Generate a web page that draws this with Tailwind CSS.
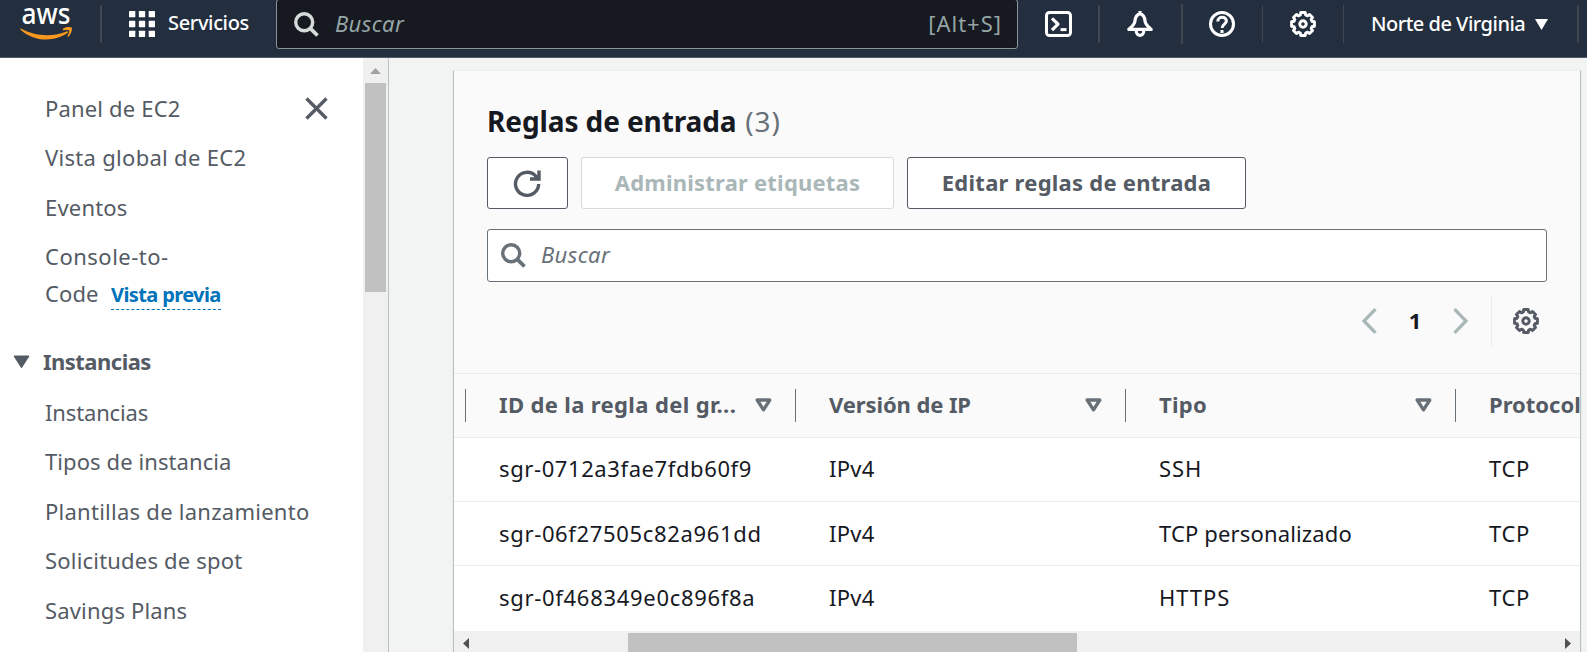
<!DOCTYPE html>
<html lang="es">
<head>
<meta charset="utf-8">
<title>EC2 | Reglas de entrada</title>
<script src="https://cdn.jsdelivr.net/npm/@tailwindcss/browser@4"></script>
</head>
<body class="flex h-[652px] w-[1587px] flex-col overflow-hidden bg-[#f2f3f3] font-['Noto_Sans',sans-serif] text-[22px] text-[#545b64]">

<svg class="hidden">
  <symbol id="gear" viewBox="-13 -13 26 26">
    <path fill="none" stroke="currentColor" stroke-width="3" stroke-linejoin="round" d="M9-2.700 11.400-2.200V2.200L9 2.700 8.200 4.500 9.500 6.500 6.500 9.500 4.500 8.200 2.700 9 2.200 11.400H-2.200L-2.700 9-4.500 8.200-6.500 9.500-9.500 6.500-8.200 4.500-9 2.700-11.400 2.200V-2.200L-9-2.700-8.200-4.500-9.500-6.500-6.500-9.500-4.500-8.200-2.700-9-2.200-11.400H2.200L2.700-9 4.500-8.200 6.500-9.500 9.500-6.500 8.200-4.500Z"/>
    <circle r="3.2" fill="none" stroke="currentColor" stroke-width="3"/>
  </symbol>
  <symbol id="search" viewBox="0 0 25 25">
    <circle cx="10.2" cy="10.2" r="8.5" fill="none" stroke="currentColor" stroke-width="3.4"/>
    <path d="M16.3 16.3l7.2 7.2" fill="none" stroke="currentColor" stroke-width="3.8"/>
  </symbol>
  <symbol id="sort" viewBox="0 0 17 14">
    <path d="M2.2 2h12.6L8.5 11.8z" fill="none" stroke="currentColor" stroke-width="3.3" stroke-linejoin="round"/>
  </symbol>
</svg>

<header class="flex h-[58px] shrink-0 items-start border-b border-[#545b64] bg-[#232f3e] text-white">
  <svg class="ml-5 h-[42px] w-[53px] shrink-0" viewBox="0 0 53 42">
    <text x="1.5" y="24" font-size="29" font-weight="500" fill="#fff" textLength="49" lengthAdjust="spacingAndGlyphs">aws</text>
    <path fill="#f7981f" d="M.8 28.6C9.500 33 17 35.300 27 35.300c7.500 0 14-1.600 19.500-3.800 1.300-.6 2.200.7 1 1.600C41.500 37.300 34 39.500 26.500 39.500 16 39.500 7.500 36 .6 29.700c-.6-.6-.5-1.400.2-1.100z"/>
    <path fill="#f7981f" d="M43 28.700c3-2 7.500-1.900 8.600-1.100 1 1-.3 6.300-2.800 8.900-.6.600-1.600.2-1.200-.4 1.100-2.300 1.900-4.900 1.400-5.600-.7-.7-3.500-.4-5.500-.2-.8.100-1-1.100-.5-1.600z"/>
  </svg>
  <div class="ml-[27px] mt-[5px] h-[38px] w-[2px] bg-[#414750]"></div>
  <svg class="ml-[27px] mt-[11px] h-[26px] w-[26px] shrink-0" viewBox="0 0 26 26" fill="#fff">
    <rect width="6.300" height="6.300" rx=".6"/><rect x="9.850" width="6.300" height="6.300" rx=".6"/><rect x="19.700" width="6.300" height="6.300" rx=".6"/>
    <rect y="9.850" width="6.300" height="6.300" rx=".6"/><rect x="9.850" y="9.850" width="6.300" height="6.300" rx=".6"/><rect x="19.700" y="9.850" width="6.300" height="6.300" rx=".6"/>
    <rect y="19.700" width="6.300" height="6.300" rx=".6"/><rect x="9.850" y="19.700" width="6.300" height="6.300" rx=".6"/><rect x="19.700" y="19.700" width="6.300" height="6.300" rx=".6"/>
  </svg>
  <span class="ml-[13px] mt-[5px] w-[83px] shrink-0 text-[20px] font-medium leading-[36px] tracking-[-0.35px]">Servicios</span>
  <div class="-mt-px ml-[25px] flex h-[50px] w-[742px] shrink-0 items-center rounded-[3px] border border-[#879596] bg-[#16191f] px-[17px] text-[#95a5a6]">
    <svg class="mt-px h-[25px] w-[25px] text-[#d5dbdb]"><use href="#search"/></svg>
    <span class="-mt-px ml-[16px] italic tracking-[0.4px]">Buscar</span>
    <span class="-mt-px ml-auto mr-[-2px] tracking-[1px]">[Alt+S]</span>
  </div>
  <svg class="ml-[27px] mt-[11px] h-[26px] w-[27px] shrink-0" viewBox="0 0 27 26" fill="none" stroke="#fff" stroke-width="3" stroke-linejoin="round">
    <rect x="1.500" y="1.500" width="24" height="23" rx="3"/><path stroke-width="3.200" d="M7 7.300l6 5.900-6 5.900"/><path d="M15.500 18.600h6"/>
  </svg>
  <div class="ml-[26px] mt-[5px] h-[38px] w-[2px] bg-[#414750]"></div>
  <svg class="ml-[27px] mt-[11px] h-[26px] w-[26px] shrink-0" viewBox="0 0 26 26" fill="none" stroke="#fff" stroke-width="3.200" stroke-linejoin="round">
    <path d="M13 0v3M13 2.800c-3.600 1-4.700 3.800-5 7C7.700 13.500 5 15.500 1.800 18.400h22.400C21 15.500 18.300 13.500 18 9.800c-.3-3.200-1.400-6-5-7z"/><path d="M9.200 19.500c0 6.500 7.600 6.500 7.600 0"/>
  </svg>
  <div class="ml-[28px] mt-[4px] h-[40px] w-[2px] bg-[#414750]"></div>
  <svg class="ml-[26px] mt-[11px] h-[26px] w-[26px] shrink-0" viewBox="0 0 26 26" fill="none" stroke="#fff" stroke-width="3">
    <circle cx="13" cy="13" r="11.500"/><path d="M8.800 10.500c0-5.600 8.600-5.400 8.600-.5 0 3.200-4.300 3-4.300 7M13 19v2.900"/>
  </svg>
  <div class="ml-[27px] mt-[5px] h-[38px] w-px bg-[#414750]"></div>
  <svg class="ml-[27px] mt-[11px] h-[26px] w-[26px] shrink-0"><use href="#gear"/></svg>
  <div class="ml-[27px] mt-[5px] h-[38px] w-px bg-[#414750]"></div>
  <span class="ml-[27px] mt-[6px] w-[155px] shrink-0 whitespace-nowrap text-[20px] font-medium leading-[36px] tracking-[-0.5px]">Norte de Virginia</span>
  <svg class="ml-[9px] mt-[19px] h-[11px] w-[13px] shrink-0" viewBox="0 0 13 11"><path fill="#fff" d="M0 0h13L6.500 11z"/></svg>
  <div class="ml-[29px] mt-[5px] h-[38px] w-[2px] bg-[#414750]"></div>
</header>

<div class="flex min-h-0 flex-1">
  <aside class="flex w-[389px] shrink-0 overflow-hidden border-r border-[#b9c2c4] bg-white">
    <nav class="w-[363px] shrink-0 pl-[45px] pt-[31.500px] leading-[37.5px]">
      <div class="mb-3 flex">
        <a class="tracking-[0.17px]">Panel de EC2</a>
        <svg class="ml-auto mr-[35.500px] mt-[7.500px] h-[23px] w-[23px]" viewBox="0 0 23 23"><path d="M1.500 1.500l20 20M21.500 1.500l-20 20" stroke="#545b64" stroke-width="3.300"/></svg>
      </div>
      <div class="mb-3 tracking-[0.3px]">Vista global de EC2</div>
      <div class="mb-3 tracking-[0.2px]">Eventos</div>
      <div class="tracking-[0.5px]">Console-to-</div>
      <div class="-mt-px flex">
        <span class="tracking-[0.1px]">Code</span>
        <span class="ml-[12.500px] mt-[10px] h-[25px] border-b border-dashed border-[#0073bb] text-[20px] font-bold leading-[20px] tracking-[-0.62px] text-[#0073bb]">Vista previa</span>
      </div>
      <div class="-ml-[32px] mb-[13.500px] mt-[30.500px] flex items-center font-bold">
        <svg class="mt-[2px] h-[14px] w-[17px]" viewBox="0 0 17 14"><path d="M1 1h15L8.500 12.800z" fill="#545b64" stroke="#545b64" stroke-linejoin="round"/></svg>
        <span class="ml-[13px] tracking-[-0.52px]">Instancias</span>
      </div>
      <div class="mb-3 tracking-[-0.15px]">Instancias</div>
      <div class="mb-3 tracking-[0.09px]">Tipos de instancia</div>
      <div class="mb-3 whitespace-nowrap tracking-[0.26px]">Plantillas de lanzamiento</div>
      <div class="mb-3 tracking-[0.2px]">Solicitudes de spot</div>
      <div class="mb-3 tracking-[0.17px]">Savings Plans</div>
      <div>Instancias reservadas</div>
    </nav>
    <div class="flex w-[25px] shrink-0 flex-col items-center bg-[#f0f0f0] pt-[10px]">
      <svg class="h-[6px] w-[11px] shrink-0" viewBox="0 0 11 6"><path fill="#a3a3a3" d="M0 6h11L5.500 0z"/></svg>
      <div class="mr-px mt-[9px] h-[209px] w-[21px] shrink-0 bg-[#c1c1c1]"></div>
    </div>
  </aside>

  <main class="flex min-w-0 flex-1 pl-[64px] pr-[6px] pt-3">
    <section class="flex w-[1128px] flex-col border-x border-t border-x-[#b9c0c0] border-t-[#eaeded] bg-[#fafafa] shadow-[0_1px_1px_rgba(0,28,36,0.2)]">
      <div class="px-[33px] pt-[30px]">
        <h1 class="h-[40px] text-[28px] leading-[40px] text-[#16191f]"><span class="font-bold tracking-[-0.1px]">Reglas de entrada</span> <span class="ml-[1.500px] tracking-[0.9px] text-[#687078]">(3)</span></h1>
        <div class="mt-[16px] flex gap-[13px] font-bold leading-[49px]">
          <div class="flex h-[52px] w-[81px] items-center justify-center rounded-[3px] border border-[#545b64] bg-white">
            <svg class="mr-px h-[27px] w-[28px]" viewBox="0 0 28 27" fill="none" stroke="#545b64" stroke-width="3.400"><path d="M25.700 14a11.600 11.500 0 1 1-2.900-7.800l3 3M26 .5v8.500H17"/></svg>
          </div>
          <div class="h-[52px] w-[313px] rounded-[3px] border border-[#d5dbdb] bg-white text-center tracking-[0.21px] text-[#aab7b8]">Administrar etiquetas</div>
          <div class="h-[52px] w-[339px] rounded-[3px] border border-[#545b64] bg-white text-center tracking-[0.25px]">Editar reglas de entrada</div>
        </div>
        <div class="mt-5 flex h-[53px] w-[1060px] items-center rounded-[3px] border border-[#687078] bg-white pl-[13px] text-[#687078]">
          <svg class="h-[25px] w-[25px]"><use href="#search"/></svg>
          <span class="-mt-[3px] ml-[15px] italic tracking-[0.4px]">Buscar</span>
        </div>
        <div class="mt-[13px] flex h-[52px] items-center">
          <svg class="ml-[875px] h-[26px] w-[15px]" viewBox="0 0 15 26"><path d="M13.500 1.200L2 13l11.500 11.800" fill="none" stroke="#aab7b8" stroke-width="3.300"/></svg>
          <span class="-mt-[2px] w-[76px] text-center font-bold text-[#16191f]">1</span>
          <svg class="h-[26px] w-[15px]" viewBox="0 0 15 26"><path d="M1.500 1.200L13 13 1.500 24.800" fill="none" stroke="#aab7b8" stroke-width="3.300"/></svg>
          <div class="ml-[23px] h-[52px] w-px bg-[#eaeded]"></div>
          <svg class="ml-[21px] h-[26px] w-[26px]"><use href="#gear"/></svg>
        </div>
      </div>

      <div class="mt-[26px] w-[1126px] overflow-hidden">
        <div class="grid h-[65px] w-[1332px] grid-cols-[330px_330px_330px_330px] items-center border-y border-[#eaeded] pl-[11px] font-bold">
          <div class="flex h-[33px] items-center border-l border-[#687078] pl-[33px]"><span class="-mt-[3px] whitespace-nowrap tracking-[0.36px]">ID de la regla del gr...</span><svg class="-mt-px ml-auto mr-[23px] h-[14px] w-[17px] text-[#687078]"><use href="#sort"/></svg></div>
          <div class="flex h-[33px] items-center border-l border-[#687078] pl-[33px]"><span class="-mt-[3px] tracking-[-0.1px]">Versión de IP</span><svg class="-mt-px ml-auto mr-[23px] h-[14px] w-[17px] text-[#687078]"><use href="#sort"/></svg></div>
          <div class="flex h-[33px] items-center border-l border-[#687078] pl-[33px]"><span class="-mt-[3px] tracking-[0.3px]">Tipo</span><svg class="-mt-px ml-auto mr-[23px] h-[14px] w-[17px] text-[#687078]"><use href="#sort"/></svg></div>
          <div class="flex h-[33px] items-center border-l border-[#687078] pl-[33px]"><span class="-mt-[3px]">Protocolo</span></div>
        </div>
        <div class="grid h-[64px] w-[1332px] grid-cols-[330px_330px_330px_330px] items-center border-b border-[#eaeded] bg-white pb-[2px] pl-[45px] text-[#16191f]">
          <span class="tracking-[0.6px]">sgr-0712a3fae7fdb60f9</span><span class="tracking-[0.3px]">IPv4</span><span class="tracking-[0.9px]">SSH</span><span class="tracking-[0.6px]">TCP</span>
        </div>
        <div class="grid h-[64px] w-[1332px] grid-cols-[330px_330px_330px_330px] items-center border-b border-[#eaeded] bg-white pl-[45px] text-[#16191f]">
          <span class="tracking-[0.66px]">sgr-06f27505c82a961dd</span><span class="tracking-[0.3px]">IPv4</span><span class="tracking-[0.15px]">TCP personalizado</span><span class="tracking-[0.6px]">TCP</span>
        </div>
        <div class="grid h-[65px] w-[1332px] grid-cols-[330px_330px_330px_330px] items-center bg-white pb-[2px] pl-[45px] text-[#16191f]">
          <span class="tracking-[0.7px]">sgr-0f468349e0c896f8a</span><span class="tracking-[0.3px]">IPv4</span><span class="tracking-[0.95px]">HTTPS</span><span class="tracking-[0.6px]">TCP</span>
        </div>
        <div class="flex h-[25px] items-center bg-[#f0f0f0] pl-[9px]">
          <svg class="h-[11px] w-[6px]" viewBox="0 0 6 11"><path fill="#505050" d="M6 0v11L0 5.500z"/></svg>
          <div class="ml-[159px] h-[21px] w-[449px] bg-[#c1c1c1]"></div>
          <svg class="ml-auto mr-[9px] h-[11px] w-[6px]" viewBox="0 0 6 11"><path fill="#505050" d="M0 0v11l6-5.500z"/></svg>
        </div>
      </div>
    </section>
  </main>
</div>
</body>
</html>
